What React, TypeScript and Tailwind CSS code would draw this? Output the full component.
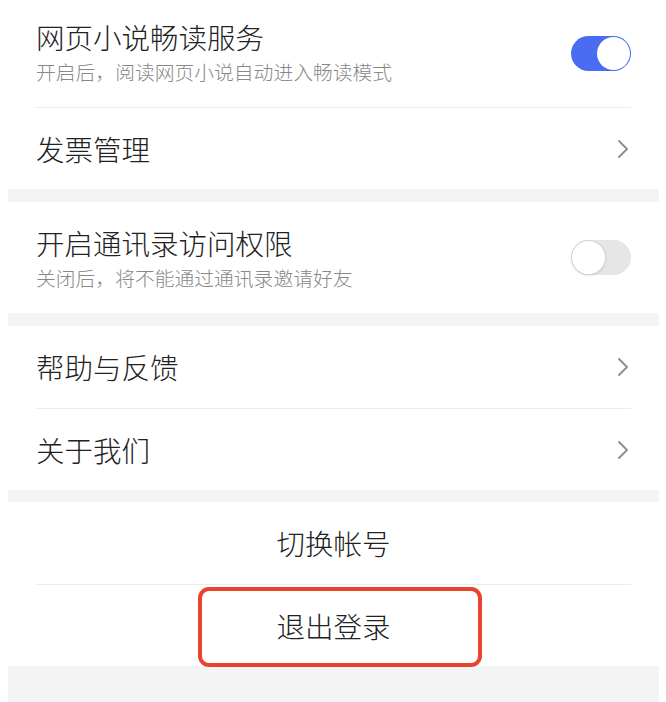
const font = { fontFamily: '"Noto Sans CJK SC", "Noto Sans", sans-serif' };

const Toggle = ({ on }: { on: boolean }) => (
  <div
    className={`relative h-[35px] w-[60px] shrink-0 rounded-full ${
      on ? "bg-[#4a6cf2]" : "bg-[#e6e6e6]"
    }`}
  >
    <div
      className={`absolute top-[1px] h-[33px] w-[33px] rounded-full bg-white ${
        on ? "right-[1px]" : "left-[1px] shadow-[0_0_0_1px_#d4d4d4,0_1px_3px_rgba(0,0,0,0.18)]"
      }`}
    />
  </div>
);

const Chevron = () => (
  <svg width="10" height="18" viewBox="0 0 10 18" className="mr-[3px] shrink-0">
    <polyline
      points="1,1 9,9 1,17"
      fill="none"
      stroke="#8c8c8c"
      strokeWidth="1.8"
      strokeLinecap="round"
      strokeLinejoin="round"
    />
  </svg>
);

const Divider = () => <div className="mx-[28px] h-px bg-[#ededed]" />;

const Gap = ({ h }: { h: string }) => <div className={`${h} bg-[#f4f4f4]`} />;

const SwitchRow = ({
  title,
  desc,
  on,
  height,
  top,
}: {
  title: string;
  desc: string;
  on: boolean;
  height: string;
  top: string;
}) => (
  <div className={`flex ${height} items-center justify-between px-[28px]`}>
    <div className={`self-start ${top}`}>
      <div className="text-[28.5px] font-light leading-[34px] text-[#222]">{title}</div>
      <div className="mt-[6px] text-[19.8px] font-light leading-[24px] text-[#888]">{desc}</div>
    </div>
    <Toggle on={on} />
  </div>
);

const LinkRow = ({ title, height }: { title: string; height: string }) => (
  <div className={`flex ${height} items-center justify-between px-[28px]`}>
    <span className="text-[28.5px] font-light leading-[34px] text-[#222]">{title}</span>
    <Chevron />
  </div>
);

export default function App() {
  return (
    <div className="bg-white pl-[8px] pr-[7px]" style={font}>
      <div className="flex h-[702px] flex-col">
        <SwitchRow
          title="网页小说畅读服务"
          desc="开启后，阅读网页小说自动进入畅读模式"
          on
          height="h-[107px]"
          top="pt-[20px]"
        />
        <Divider />
        <LinkRow title="发票管理" height="h-[81px]" />
        <Gap h="h-[13px]" />
        <SwitchRow
          title="开启通讯录访问权限"
          desc="关闭后，将不能通过通讯录邀请好友"
          on={false}
          height="h-[111px]"
          top="pt-[24px]"
        />
        <Gap h="h-[13px]" />
        <LinkRow title="帮助与反馈" height="h-[82px]" />
        <Divider />
        <LinkRow title="关于我们" height="h-[81px]" />
        <Gap h="h-[12px]" />
        <div className="flex h-[82px] items-center justify-center">
          <span className="text-[28.5px] font-light leading-[34px] text-[#222]">切换帐号</span>
        </div>
        <Divider />
        <div className="relative flex h-[81px] items-center justify-center">
          <span className="text-[28.5px] font-light leading-[34px] text-[#222]">退出登录</span>
          {/* highlight frame around the logout button */}
          <div className="absolute left-[190px] top-[2px] h-[80px] w-[284px] rounded-[11px] border-[4px] border-[#e8432d]" />
        </div>
        <div className="flex-1 bg-[#f4f4f4]" />
      </div>
    </div>
  );
}
